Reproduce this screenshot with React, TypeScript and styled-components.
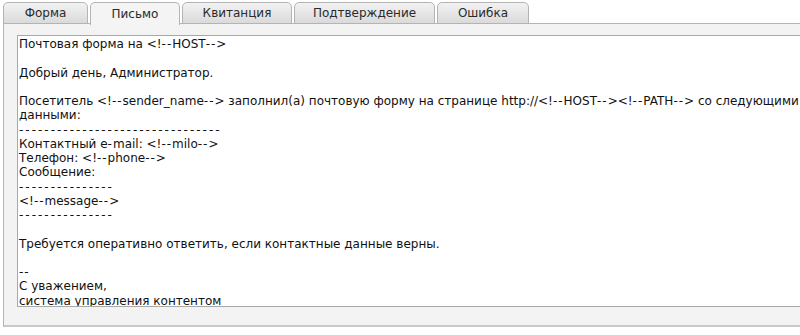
import { useState } from "react";
import styled, { createGlobalStyle } from "styled-components";

const GlobalStyle = createGlobalStyle`
  html, body {
    margin: 0;
    padding: 0;
    background: #ffffff;
    overflow: hidden;
  }
`;

const Page = styled.div`
  padding: 2px 0 0 3px;
  font-family: "DejaVu Sans", Verdana, sans-serif;
`;

const TabBar = styled.div`
  display: flex;
  gap: 2px;
  height: 22px;
  position: relative;
  z-index: 1;
`;

const Tab = styled.button<{ $active: boolean; $width: number }>`
  box-sizing: border-box;
  height: ${(p) => (p.$active ? "23px" : "22px")};
  width: ${(p) => p.$width}px;
  padding: 0;
  border: 1px solid #b4b4b4;
  border-bottom: ${(p) => (p.$active ? "none" : "1px solid #b4b4b4")};
  border-radius: 5px 5px 0 0;
  background: ${(p) =>
    p.$active ? "#f4f4f4" : "linear-gradient(#f2f2f2, #dadada)"};
  color: #2a2a2a;
  font-family: "DejaVu Sans", Verdana, sans-serif;
  font-size: 12px;
  line-height: 20px;
  text-align: center;
  cursor: pointer;
`;

const Panel = styled.div`
  box-sizing: border-box;
  width: 840px;
  height: 304px;
  margin-top: -1px;
  border: 1px solid #b4b4b4;
  border-bottom-width: 2px;
  border-bottom-color: #c8c8c8;
  background: #f3f3f3;
  padding: 11px 0 0 13px;
`;

const Letter = styled.div`
  box-sizing: border-box;
  width: 800px;
  height: 272px;
  padding: 1px 1px;
  border: 1px solid #a8a8a8;
  background: #ffffff;
  color: #111111;
  font-family: "DejaVu Sans", Verdana, sans-serif;
  font-size: 12px;
  line-height: 14.25px;
  overflow: hidden;
`;

const Line = styled.div<{ $rule?: boolean }>`
  white-space: pre;
  min-height: 14.25px;
  letter-spacing: ${(p) => (p.$rule ? "2px" : "normal")};
`;

const Dashes = styled.span`
  letter-spacing: 1px;
`;

const tabs = [
  { title: "Форма", width: 85 },
  { title: "Письмо", width: 90 },
  { title: "Квитанция", width: 110 },
  { title: "Подтверждение", width: 141 },
  { title: "Ошибка", width: 92 },
];

const letterLines = [
  "Почтовая форма на <!--HOST-->",
  "",
  "Добрый день, Администратор.",
  "",
  "Посетитель <!--sender_name--> заполнил(а) почтовую форму на странице http://<!--HOST--><!--PATH--> со следующими",
  "данными:",
  "--------------------------------",
  "Контактный e-mail: <!--milo-->",
  "Телефон: <!--phone-->",
  "Сообщение:",
  "---------------",
  "<!--message-->",
  "---------------",
  "",
  "Требуется оперативно ответить, если контактные данные верны.",
  "",
  "--",
  "С уважением,",
  "система управления контентом",
];

const isRule = (text: string) => /^-{3,}$/.test(text);

const renderLine = (text: string) =>
  isRule(text)
    ? text
    : text.split(/(-+)/).map((part, i) =>
        /^-+$/.test(part) ? <Dashes key={i}>{part}</Dashes> : part
      );

const App = () => {
  const [active, setActive] = useState(1);

  return (
    <Page>
      <GlobalStyle />
      <TabBar>
        {tabs.map((tab, i) => (
          <Tab
            key={tab.title}
            $active={i === active}
            $width={tab.width}
            onClick={() => setActive(i)}
          >
            {tab.title}
          </Tab>
        ))}
      </TabBar>
      <Panel>
        <Letter>
          {letterLines.map((line, i) => (
            <Line key={i} $rule={isRule(line)}>
              {renderLine(line)}
            </Line>
          ))}
        </Letter>
      </Panel>
    </Page>
  );
};

export default App;
